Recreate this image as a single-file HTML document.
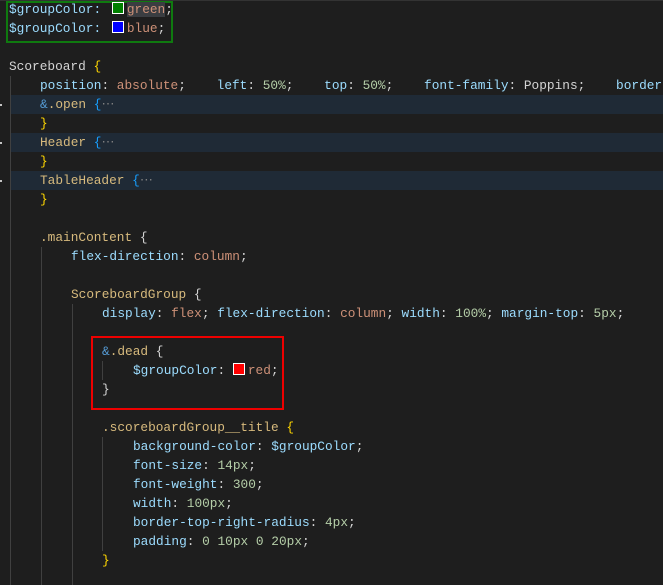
<!DOCTYPE html>
<html><head><meta charset="utf-8"><style>
body{margin:0;width:663px;height:585px;background:#1e1e1e;overflow:hidden;position:relative;font-family:"Liberation Mono",monospace;font-size:12.8px;}
.l{position:absolute;left:0;height:19px;line-height:19px;white-space:pre;color:#d4d4d4;width:663px}
.hl{background:#1f2a36;left:10px;width:653px;position:absolute;height:19px}
.p{color:#9cdcfe}.v{color:#ce9178}.n{color:#b5cea8}.s{color:#d7ba7d}.a{color:#569cd6}.y{color:#ffd700}.b{color:#179fff}.g{color:#808080}
.sw{display:inline-block;width:10px;height:10px;border:1px solid #fff;margin:0 3px 0 3px;vertical-align:-1px}
.guide{position:absolute;width:1px;background:#404040}
.dot{position:absolute;left:0;width:2px;height:2px;background:#c5c5c5}
</style></head><body>
<div class="hl" style="top:95px"></div>
<div class="hl" style="top:133px"></div>
<div class="hl" style="top:171px"></div>
<div class="dot" style="top:104px"></div><div class="dot" style="top:142px"></div><div class="dot" style="top:180px"></div>
<div class="guide" style="left:10px;top:76px;height:509px"></div>
<div class="guide" style="left:41px;top:247px;height:338px"></div>
<div class="guide" style="left:72px;top:304px;height:281px"></div>
<div class="guide" style="left:102px;top:361px;height:19px"></div>
<div class="guide" style="left:102px;top:437px;height:114px"></div>
<div style="position:absolute;left:0;top:0;width:663px;height:1px;background:#333"></div>
<div style="position:absolute;left:6px;top:1px;width:163px;height:38px;border:2px solid #0f7a0f"></div>
<div style="position:absolute;left:91px;top:336px;width:189px;height:70px;border:2px solid #e00"></div>

<div class="l" style="top:0"><span style="padding-left:9px" class="p">$groupColor:</span> <span class="sw" style="background:#008000"></span><span class="v" style="background:#3a3d41">green</span>;</div>
<div class="l" style="top:19px"><span style="padding-left:9px" class="p">$groupColor:</span> <span class="sw" style="background:#0000ff"></span><span class="v">blue</span>;</div>
<div class="l" style="top:57px;padding-left:9px">Scoreboard <span class="y">{</span></div>
<div class="l" style="top:76px;padding-left:40px"><span class="p">position</span>: <span class="v">absolute</span>;    <span class="p">left</span>: <span class="n">50%</span>;    <span class="p">top</span>: <span class="n">50%</span>;    <span class="p">font-family</span>: Poppins;    <span class="p">border</span></div>
<div class="l" style="top:95px;padding-left:40px"><span class="a">&amp;</span><span class="s">.open</span> <span class="b">{</span><span class="g">⋯</span></div>
<div class="l" style="top:114px;padding-left:40px"><span class="y">}</span></div>
<div class="l" style="top:133px;padding-left:40px"><span class="s">Header</span> <span class="b">{</span><span class="g">⋯</span></div>
<div class="l" style="top:152px;padding-left:40px"><span class="y">}</span></div>
<div class="l" style="top:171px;padding-left:40px"><span class="s">TableHeader</span> <span class="b">{</span><span class="g">⋯</span></div>
<div class="l" style="top:190px;padding-left:40px"><span class="y">}</span></div>
<div class="l" style="top:228px;padding-left:40px"><span class="s">.mainContent</span> {</div>
<div class="l" style="top:247px;padding-left:71px"><span class="p">flex-direction</span>: <span class="v">column</span>;</div>
<div class="l" style="top:285px;padding-left:71px"><span class="s">ScoreboardGroup</span> {</div>
<div class="l" style="top:304px;padding-left:102px"><span class="p">display</span>: <span class="v">flex</span>; <span class="p">flex-direction</span>: <span class="v">column</span>; <span class="p">width</span>: <span class="n">100%</span>; <span class="p">margin-top</span>: <span class="n">5px</span>;</div>
<div class="l" style="top:342px;padding-left:102px"><span class="a">&amp;</span><span class="s">.dead</span> {</div>
<div class="l" style="top:361px;padding-left:133px"><span class="p">$groupColor</span>: <span class="sw" style="background:#ff0000;margin-left:0"></span><span class="v">red</span>;</div>
<div class="l" style="top:380px;padding-left:102px">}</div>
<div class="l" style="top:418px;padding-left:102px"><span class="s">.scoreboardGroup__title</span> <span class="y">{</span></div>
<div class="l" style="top:437px;padding-left:133px"><span class="p">background-color</span>: <span class="p">$groupColor</span>;</div>
<div class="l" style="top:456px;padding-left:133px"><span class="p">font-size</span>: <span class="n">14px</span>;</div>
<div class="l" style="top:475px;padding-left:133px"><span class="p">font-weight</span>: <span class="n">300</span>;</div>
<div class="l" style="top:494px;padding-left:133px"><span class="p">width</span>: <span class="n">100px</span>;</div>
<div class="l" style="top:513px;padding-left:133px"><span class="p">border-top-right-radius</span>: <span class="n">4px</span>;</div>
<div class="l" style="top:532px;padding-left:133px"><span class="p">padding</span>: <span class="n">0</span> <span class="n">10px</span> <span class="n">0</span> <span class="n">20px</span>;</div>
<div class="l" style="top:551px;padding-left:102px"><span class="y">}</span></div>
</body></html>
